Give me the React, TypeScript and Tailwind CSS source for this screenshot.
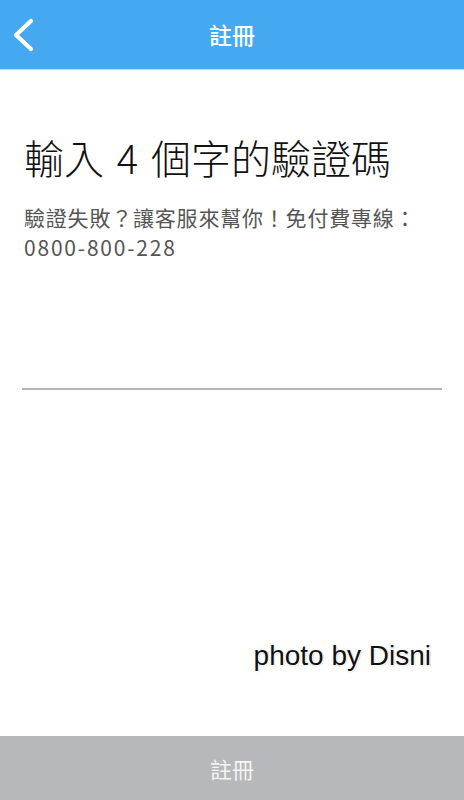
export default function App() {
  return (
    <div
      className="flex h-screen w-full flex-col bg-white"
      style={{ fontFamily: '"Noto Sans CJK TC", "Noto Sans", sans-serif' }}
    >
      {/* nav bar */}
      <header className="flex h-[70px] shrink-0 items-center border-b border-[#d9d9d9] bg-[#45a9f2]">
        <div className="flex w-[60px] items-center pl-[12px]">
          <svg width="24" height="34" viewBox="0 0 24 34" fill="none">
            <polyline
              points="19,3 4,17 19,31"
              stroke="white"
              strokeWidth="4.2"
              strokeLinecap="round"
              strokeLinejoin="round"
            />
          </svg>
        </div>
        <h1 className="flex-1 text-center text-[23px] font-medium leading-none text-white">註冊</h1>
        <div className="w-[60px]" />
      </header>

      <main className="flex flex-1 flex-col">
        <h2 className="mt-[63px] pl-[24px] text-[40px] font-light leading-[48px] text-[#111]">
          輸入 <span className="mx-[4px]">4</span> 個字的驗證碼
        </h2>
        <p className="mt-[21px] px-[24px] text-[21px] leading-[30px] text-[#555]">
          <span className="tracking-[0.8px]">驗證失敗？讓客服來幫你！免付費專線：</span>
          <br />
          <span className="tracking-[1.8px]">0800-800-228</span>
        </p>

        <div className="mx-[22px] mt-[126px] h-[2px] bg-[#b5b5b5]" />

        <div
          className="mt-[249px] pr-[33px] text-right text-[28px] leading-[34px] text-[#111]"
          style={{
            fontFamily: '"Liberation Sans", Arial, sans-serif',
            textShadow: "1px 1px 0 #fff, -1px -1px 0 #fff, 1px 1px 1px #999",
          }}
        >
          photo by Disni
        </div>
      </main>

      <footer className="flex h-[64px] shrink-0 items-center justify-center bg-[#b7b8bb]">
        <span className="text-[22px] leading-none text-[#f4f4f4]">註冊</span>
      </footer>
    </div>
  );
}
